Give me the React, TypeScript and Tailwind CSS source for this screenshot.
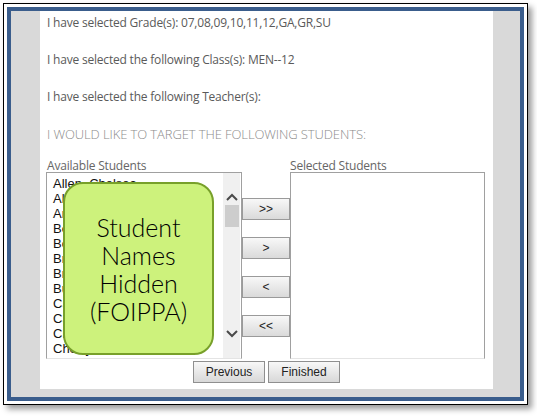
import type { ReactNode } from 'react';

const STUDENTS = [
  'Allen, Chelsea',
  'Alvarez, Mia',
  'Archer, Tyler',
  'Bennett, Liam',
  'Bowen, Jordan',
  'Brady, Emma',
  'Brooks, Owen',
  'Burke, Hannah',
  'Carter, Noah',
  'Castro, Ella',
  'Chan, Marcus',
  'Cherry, Ava',
];

function MoveButton({ children }: { children: ReactNode }) {
  return (
    <button className="h-[22px] w-[48px] border border-[#9a9a9a] bg-gradient-to-b from-[#f8f8f8] to-[#dadada] text-[12px] text-[#222] font-['Liberation_Sans',Arial,sans-serif] leading-none">
      {children}
    </button>
  );
}

function NavButton({ children }: { children: ReactNode }) {
  return (
    <button className="h-[22px] w-[72px] border border-[#8f8f8f] bg-gradient-to-b from-[#f8f8f8] to-[#d8d8d8] text-[12px] text-[#222] font-['Liberation_Sans',Arial,sans-serif] leading-none">
      {children}
    </button>
  );
}

function Chevron({ up }: { up?: boolean }) {
  return (
    <svg width="12" height="8" viewBox="0 0 12 8" className="block">
      <polyline
        points={up ? '1,7 6,2 11,7' : '1,1 6,6 11,1'}
        fill="none"
        stroke="#4a4a4a"
        strokeWidth="2"
      />
    </svg>
  );
}

export default function App() {
  return (
    <div className="w-[537px] h-[416px] bg-white pl-[3px] pt-[3px]">
      {/* screenshot frame */}
      <div className="w-[525px] h-[402px] border border-black p-[3px] shadow-[4px_4px_6px_rgba(0,0,0,0.4)]">
        <div className="h-full border-[4px] border-[#3a5d8c] bg-[#d9d9d9] pl-[29px] pr-[27px] pb-[8px]">
          <div className="h-full bg-white font-['Open_Sans','Noto_Sans',sans-serif] text-[#5a5a5a]">
            {/* summary lines */}
            <div className="pl-[7px] pt-[4px] flex flex-col gap-[21px] text-[12px] leading-[16px] tracking-[-0.2px]">
              <div>I have selected Grade(s): 07,08,09,10,11,12,GA,GR,SU</div>
              <div>I have selected the following Class(s): MEN-&#8203;-12</div>
              <div>I have selected the following Teacher(s):</div>
              <div className="text-[#8c8c8c] font-light text-[13px] tracking-[-0.1px]">
                I WOULD LIKE TO TARGET THE FOLLOWING STUDENTS:
              </div>
            </div>

            {/* labels */}
            <div className="mt-[17px] flex pl-[7px] text-[12px] leading-[14px] text-[#666] tracking-[-0.2px]">
              <div className="w-[243px]">Available Students</div>
              <div>Selected Students</div>
            </div>

            {/* pickers */}
            <div className="mt-[-1px] flex pl-[6px]">
              <div className="relative w-[196px] h-[187px] border border-[#a0a0a0] border-b-[#e4e4e4] flex">
                <div className="flex-1 pl-[6px] pt-[3px] text-[13px] leading-[15px] text-[#111] font-['Liberation_Sans',Arial,sans-serif] overflow-hidden">
                  {STUDENTS.map((name) => (
                    <div key={name} className="whitespace-nowrap">{name}</div>
                  ))}
                </div>
                <div className="w-[17px] mr-[1px] bg-[#f0f0f0] flex flex-col items-center pt-[20px]">
                  <Chevron up />
                  <div className="mt-[4px] w-[14px] h-[22px] bg-[#cdcdcd]" />
                  <div className="flex-1" />
                  <div className="mb-[20px]">
                    <Chevron />
                  </div>
                </div>
                {/* privacy overlay */}
                <div className="absolute left-[16px] top-[9px] w-[151px] h-[173px] rounded-[20px] border-2 border-[#78a02a] bg-[#cdf27c] flex items-center justify-center">
                  <div className="text-center text-[25px] leading-[28px] text-black font-['Lato',sans-serif] font-light">
                    Student
                    <br />
                    Names
                    <br />
                    Hidden
                    <br />
                    (FOIPPA)
                  </div>
                </div>
              </div>

              <div className="w-[48px] flex flex-col gap-[17px] pt-[26px]">
                <MoveButton>&gt;&gt;</MoveButton>
                <MoveButton>&gt;</MoveButton>
                <MoveButton>&lt;</MoveButton>
                <MoveButton>&lt;&lt;</MoveButton>
              </div>

              <div className="w-[195px] h-[187px] border border-[#a0a0a0] border-b-[#e4e4e4]" />
            </div>

            {/* nav */}
            <div className="mt-[2px] flex justify-center gap-[3px]">
              <NavButton>Previous</NavButton>
              <NavButton>Finished</NavButton>
            </div>
          </div>
        </div>
      </div>
    </div>
  );
}
